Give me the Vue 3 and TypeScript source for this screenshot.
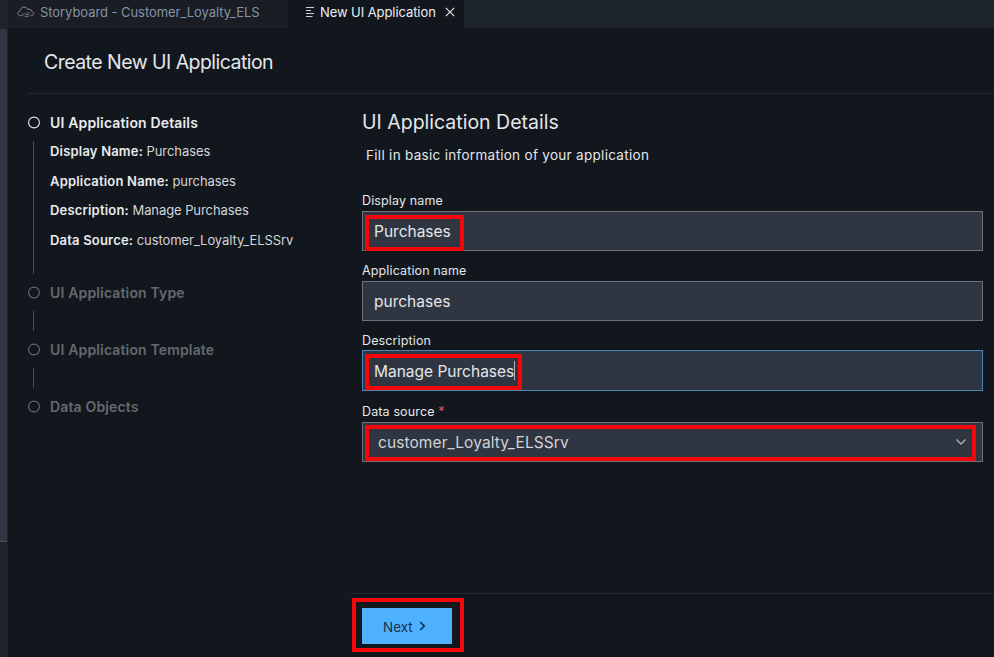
<script setup lang="ts">
import { ref } from 'vue'

interface Detail {
  label: string
  value: string
}
interface Field {
  label: string
  value: string
  kind: string
  required?: boolean
  mark?: boolean
}

const details = ref<Detail[]>([
  { label: 'Display Name:', value: 'Purchases' },
  { label: 'Application Name:', value: 'purchases' },
  { label: 'Description:', value: 'Manage Purchases' },
  { label: 'Data Source:', value: 'customer_Loyalty_ELSSrv' },
])

const steps = ['UI Application Type', 'UI Application Template', 'Data Objects']

const fields = ref<Field[]>([
  { label: 'Display name', value: 'Purchases', kind: 'display', mark: true },
  { label: 'Application name', value: 'purchases', kind: 'app' },
  { label: 'Description', value: 'Manage Purchases', kind: 'desc', mark: true },
  { label: 'Data source', value: 'customer_Loyalty_ELSSrv', kind: 'source', required: true, mark: true },
])
</script>

<template>
  <div class="window">
    <aside class="rail"><div class="thumb"></div></aside>
    <div class="main">
      <nav class="tabs">
        <div class="tab idle">
          <svg class="cloud" width="18" height="14" viewBox="0 0 18 14" fill="none" stroke="currentColor">
            <path d="M5 10.700H3.600C2 10.700.9 9.600.9 8.200c0-1.300.9-2.200 2.200-2.400C3.300 3.700 4.900 2.100 7 2.100c1.600 0 2.900.8 3.600 2.200 2-.6 3.700.3 4 2 1.200.2 2 1 2 2.100 0 1.400-1 2.300-2.400 2.300H13.600" />
            <path d="M5 7.800l1.700 1.700L5 11.200M7.800 7.800l1.500 2.400M10 8h2.500M9.500 9.700h3M7.600 11.400h4.500" stroke-width=".8" />
          </svg>
          <span>Storyboard - Customer_Loyalty_ELS</span>
        </div>
        <div class="tab active">
          <svg class="list" width="10" height="10" viewBox="0 0 10 10" stroke="currentColor">
            <path d="M1 .5H9M1 3.500H6M1 6.500H9M1 9.500H7.500" stroke-opacity=".85" />
          </svg>
          <span>New UI Application</span>
          <svg class="close" width="10" height="10" viewBox="0 0 10 10" stroke="currentColor" stroke-width="1.100">
            <path d="M.8.8l8.400 8.400M9.200.8L.8 9.200" />
          </svg>
        </div>
      </nav>

      <header class="heading"><h1>Create New UI Application</h1></header>

      <div class="body">
        <section class="steps">
          <div class="step current">
            <svg class="ring" width="12" height="13" viewBox="0 0 12 13" fill="none" stroke="currentColor" stroke-width="1.100">
              <circle cx="6" cy="6.500" r="5.400" />
            </svg>
            <strong>UI Application Details</strong>
          </div>
          <div class="summary">
            <p v-for="d in details" :key="d.label"><b>{{ d.label }}</b> {{ d.value }}</p>
          </div>
          <template v-for="(s, i) in steps" :key="s">
            <div class="step">
              <svg class="ring" width="12" height="13" viewBox="0 0 12 13" fill="none" stroke="currentColor" stroke-width="1.100">
                <circle cx="6" cy="6.500" r="5.400" />
              </svg>
              <strong>{{ s }}</strong>
            </div>
            <div v-if="i < steps.length - 1" class="link"></div>
          </template>
        </section>

        <section class="panel">
          <h2>UI Application Details</h2>
          <p class="intro">Fill in basic information of your application</p>
          <div class="form">
            <div v-for="f in fields" :key="f.kind" class="field" :class="f.kind">
              <label>{{ f.label }}<em v-if="f.required"> *</em></label>
              <div class="box">
                <span class="value">{{ f.value }}</span>
                <i v-if="f.kind === 'desc'" class="caret"></i>
                <svg v-if="f.kind === 'source'" class="chevron" width="12" height="8" viewBox="0 0 12 8" fill="none" stroke="currentColor" stroke-width="1.500">
                  <path d="M1.500 1.500L6 6l4.500-4.500" />
                </svg>
                <i v-if="f.mark" class="mark"></i>
              </div>
            </div>
          </div>
          <footer class="actions">
            <button class="next" type="button">
              <span>Next</span>
              <svg width="7" height="10" viewBox="0 0 7 10" fill="none" stroke="currentColor" stroke-width="1.700">
                <path d="M1.200 1L5.200 5 1.200 9" />
              </svg>
              <i class="mark"></i>
            </button>
          </footer>
        </section>
      </div>
    </div>
  </div>
</template>

<style>
body {
  background: #12171e;
}
</style>

<style scoped>
* {
  box-sizing: border-box;
}
.window {
  display: flex;
  width: 100%;
  height: 657px;
  overflow: hidden;
  background: #12171e;
  color: #e4e6e9;
  font-family: Inter, "Liberation Sans", sans-serif;
  font-size: 13px;
  white-space: nowrap;
}
h1, h2, p {
  margin: 0;
  font-weight: 400;
}
.rail {
  flex: 0 0 8px;
  padding-top: 29px;
  background: #1d242c;
}
.thumb {
  width: 7px;
  height: 513px;
  background: #303642;
  border-bottom: 1px solid #50535a;
}
.main {
  flex: 1;
  display: flex;
  flex-direction: column;
  min-width: 0;
}
.tabs {
  display: flex;
  height: 28px;
  background: #1d242b;
}
.tab {
  display: flex;
  align-items: center;
  padding-bottom: 4px;
  height: 28px;
}
.tab.idle {
  width: 280px;
  padding-left: 9px;
  background: #1a1d24;
  color: #8393a6;
  letter-spacing: -0.060px;
}
.cloud {
  margin-right: 5px;
  color: #858a90;
}
.tab.active {
  width: 176px;
  padding-left: 17px;
  background: #12171e;
  color: #eceef0;
  letter-spacing: -0.080px;
}
.list {
  margin-right: 5px;
}
.close {
  margin-left: 9px;
}
.heading {
  height: 66px;
  margin-left: 20px;
  padding: 20px 0 0 16px;
  border-bottom: 1px solid #1e2a3a;
}
h1 {
  font-size: 19.500px;
  line-height: 28px;
  letter-spacing: -0.540px;
}
.body {
  display: flex;
  flex: 1;
}
.steps {
  width: 342px;
  padding: 19px 0 0 20px;
}
.step {
  display: flex;
  align-items: flex-start;
  gap: 10px;
  height: 20px;
  padding-top: 3px;
  color: #65696e;
  font-size: 14px;
  letter-spacing: 0.150px;
}
.step strong {
  margin-top: -2px;
  font-weight: 600;
  line-height: 18px;
}
.step.current {
  color: #e8eaec;
}
.summary {
  height: 133px;
  margin: 8px 0 9px 5px;
  padding-left: 16px;
  border-left: 1px solid #494b4e;
  color: #d2d5d9;
  font-size: 13px;
  letter-spacing: -0.080px;
}
.summary p {
  height: 29.500px;
  line-height: 20px;
}
.summary b {
  color: #e8eaec;
  font-weight: 600;
  letter-spacing: 0.190px;
}
.link {
  height: 20px;
  margin: 8px 0 9px 5px;
  border-left: 1px solid #494b4e;
}
.panel {
  flex: 1;
  display: flex;
  flex-direction: column;
}
h2 {
  height: 28px;
  margin: 14px 0 0 12px;
  font-size: 19.500px;
  line-height: 28px;
}
.intro {
  height: 20px;
  margin: 9px 0 0 16px;
  font-size: 13.500px;
  line-height: 20px;
  letter-spacing: 0.300px;
}
.form {
  display: grid;
  gap: 10px;
  margin: 26px 11px 0 12px;
}
.field label {
  display: block;
  height: 20px;
  font-size: 12.500px;
  line-height: 19px;
  letter-spacing: 0.130px;
}
.field em {
  color: #e35d60;
  font-style: normal;
}
.box {
  position: relative;
  display: flex;
  align-items: center;
  height: 40px;
  padding: 0 11px;
  border: 1px solid #6d7279;
  background: #303641;
  font-size: 15.500px;
}
.desc label {
  height: 19px;
}
.desc .box {
  height: 41px;
  border-color: #4a86b8;
}
.desc .value {
  padding-top: 1px;
}
.field.source {
  padding-top: 1px;
}
.source .box {
  padding-left: 15px;
}
.source .value {
  flex: 1;
  color: #cfd3d8;
  letter-spacing: 0.090px;
}
.caret {
  width: 1px;
  height: 19px;
  background: #aeb3bb;
}
.chevron {
  margin-right: 4px;
  color: #a5abb4;
}
.mark {
  position: absolute;
  border: 4px solid #f4070a;
}
.display .mark {
  left: 2px;
  top: 3px;
  width: 99px;
  height: 36px;
}
.desc .mark {
  left: 2px;
  top: 3px;
  width: 157px;
  height: 36px;
}
.source .mark {
  left: 2px;
  top: 2px;
  width: 611px;
  height: 36px;
}
.actions {
  height: 64px;
  margin-top: auto;
  padding: 14px 0 0 12px;
  border-top: 1px solid #1e2a35;
}
.next {
  position: relative;
  display: flex;
  align-items: center;
  gap: 6px;
  width: 90px;
  height: 36px;
  padding: 0 0 0 21px;
  border: 0;
  background: #4eb1ff;
  color: #17324a;
  font-family: inherit;
  font-size: 13.500px;
}
.next span {
  padding-top: 1px;
}
.next .mark {
  left: -10px;
  top: -10px;
  width: 112px;
  height: 54px;
}
</style>
